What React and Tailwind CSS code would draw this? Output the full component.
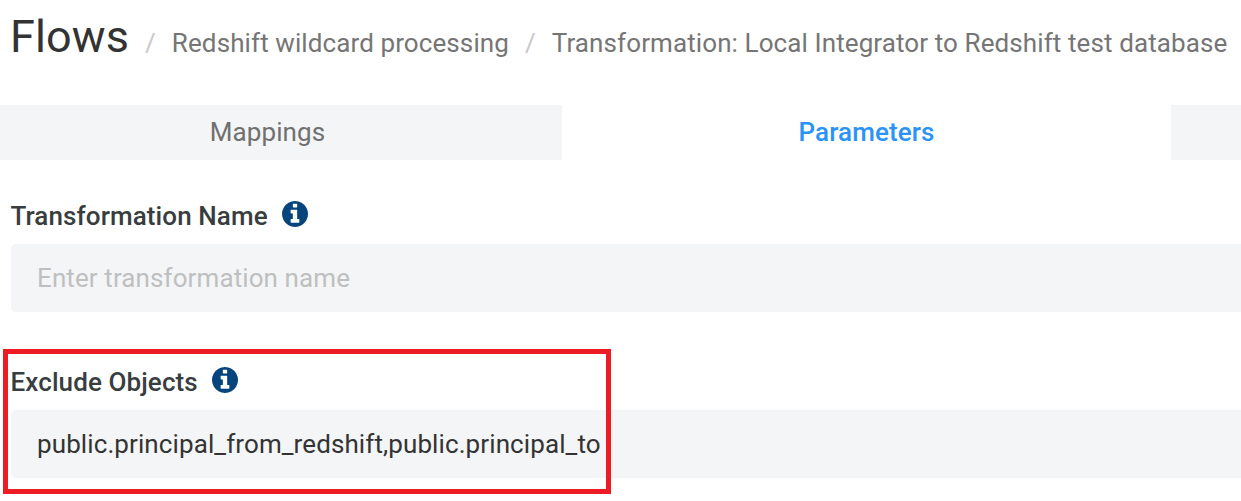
const fields = [
  { label: 'Transformation Name', placeholder: 'Enter transformation name', value: '' },
  { label: 'Exclude Objects', placeholder: '', value: 'public.principal_from_redshift,public.principal_to' },
];

function InfoIcon() {
  return (
    <svg viewBox="128 128 1536 1536" className="mb-[4px] ml-[14px] h-[26px] w-[26px] text-[#05447c]" fill="currentColor">
      <path d="M1152 1376v-160q0-14-9-23t-23-9h-96v-512q0-14-9-23t-23-9h-320q-14 0-23 9t-9 23v160q0 14 9 23t23 9h96v320h-96q-14 0-23 9t-9 23v160q0 14 9 23t23 9h448q14 0 23-9t9-23zm-128-896v-160q0-14-9-23t-23-9h-192q-14 0-23 9t-9 23v160q0 14 9 23t23 9h192q14 0 23-9t9-23zm640 416q0 209-103 385.5t-279.5 279.5-385.5 103-385.5-103-279.5-279.5-103-385.5 103-385.5 279.5-279.5 385.5-103 385.5 103 279.5 279.5 103 385.5z" />
    </svg>
  );
}

function Field({ label, placeholder, value }) {
  return (
    <div className="h-[166px] pl-[11px]">
      <div className="flex h-[44px] items-center">
        <span className="-ml-[0.5px] text-[26px] leading-[30px] font-medium text-[#383d40] whitespace-nowrap">{label}</span>
        <InfoIcon />
      </div>
      <div className="mt-[6px] flex h-[68px] items-center rounded-l-[5px] bg-[#f3f5f7] pl-[26px] text-[26px] whitespace-nowrap">
        {value ? <span className="text-[#333333]">{value}</span> : <span className="text-[#bfbfbf]">{placeholder}</span>}
      </div>
    </div>
  );
}

export default function App() {
  return (
    <div className="relative h-[501px] w-[1241px] overflow-hidden bg-white font-[Roboto,sans-serif] tracking-[0.1px]">
      <header className="flex h-[105px] items-baseline pt-[10px] pl-[10px] text-[26px] whitespace-nowrap text-[#757575]">
        <h1 className="text-[45px] leading-[54px] text-[#333333]">Flows</h1>
        <span className="ml-[16px] text-[#c8c8c8]">/</span>
        <span className="ml-[16px]">Redshift wildcard processing</span>
        <span className="ml-[16px] text-[#c8c8c8]">/</span>
        <span className="ml-[16px]">Transformation: Local Integrator to Redshift test database</span>
      </header>
      <nav className="flex h-[55px] text-[26px] font-medium">
        <div className="flex w-[562px] items-center justify-center bg-[#f3f5f7] pr-[27px] font-normal text-[#707070]">Mappings</div>
        <div className="flex w-[609px] items-center justify-center text-[#2b93f7]">Parameters</div>
        <div className="flex-1 bg-[#f3f5f7]" />
      </nav>
      <main className="pt-[34px]">
        {fields.map((field) => (
          <Field key={field.label} {...field} />
        ))}
      </main>
      <div className="absolute top-[349px] left-[3px] h-[145px] w-[608px] border-[5px] border-[#ed1c24]" />
    </div>
  );
}
